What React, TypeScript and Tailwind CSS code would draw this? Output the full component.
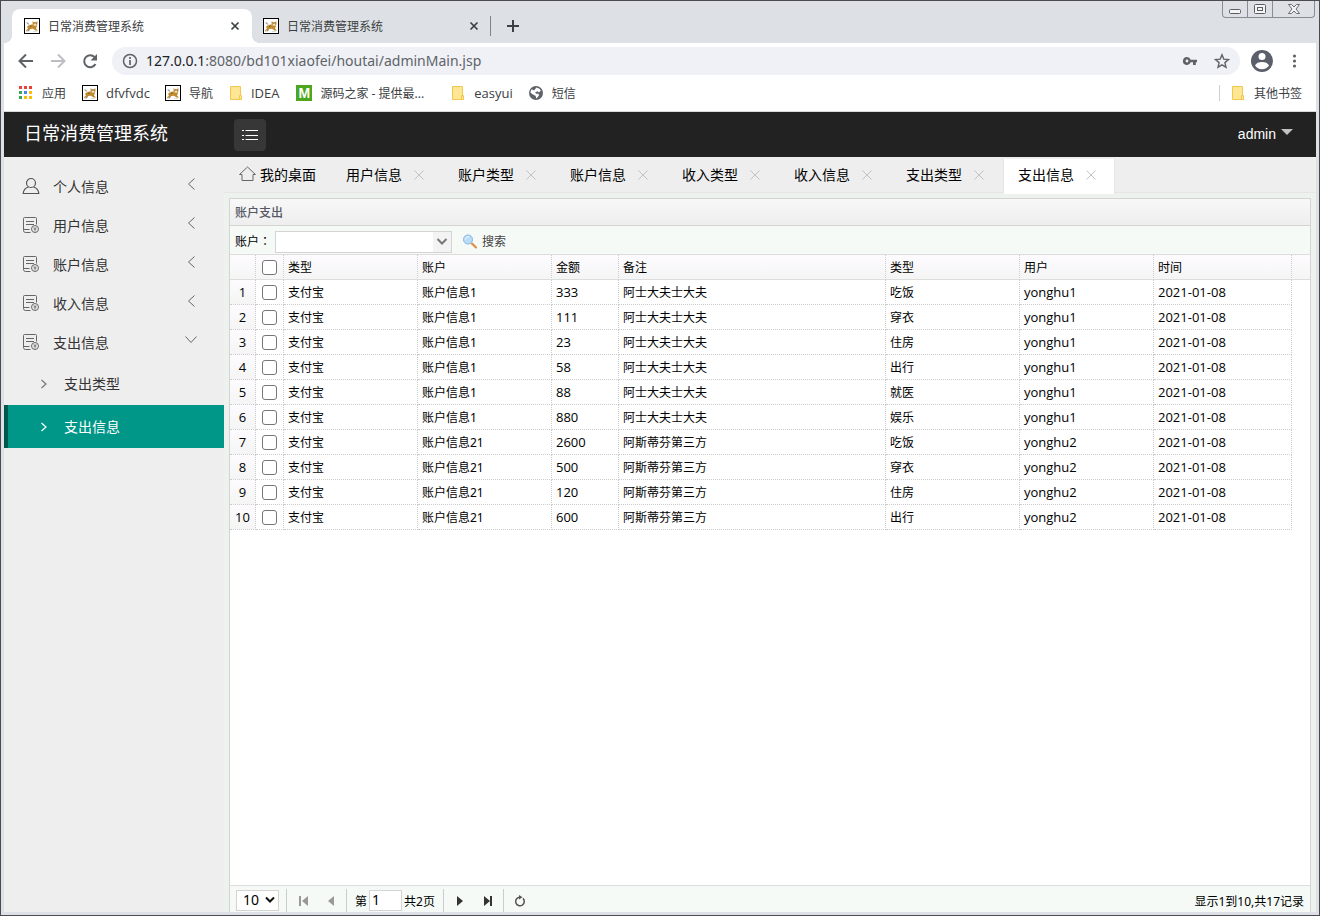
import clsx from 'clsx';
import { useState } from 'react';

const font = "font-['Noto_Sans','Noto_Sans_CJK_SC',sans-serif]";
const latin = "font-['Open_Sans','Noto_Sans_CJK_SC',sans-serif]";

const menus = ['个人信息', '用户信息', '账户信息', '收入信息', '支出信息'];
const tabs = ['用户信息', '账户类型', '账户信息', '收入类型', '收入信息', '支出类型', '支出信息'];

const rows = [
  { account: '账户信息1', amount: 333, note: '阿士大夫士大夫', kind: '吃饭', user: 'yonghu1' },
  { account: '账户信息1', amount: 111, note: '阿士大夫士大夫', kind: '穿衣', user: 'yonghu1' },
  { account: '账户信息1', amount: 23, note: '阿士大夫士大夫', kind: '住房', user: 'yonghu1' },
  { account: '账户信息1', amount: 58, note: '阿士大夫士大夫', kind: '出行', user: 'yonghu1' },
  { account: '账户信息1', amount: 88, note: '阿士大夫士大夫', kind: '就医', user: 'yonghu1' },
  { account: '账户信息1', amount: 880, note: '阿士大夫士大夫', kind: '娱乐', user: 'yonghu1' },
  { account: '账户信息21', amount: 2600, note: '阿斯蒂芬第三方', kind: '吃饭', user: 'yonghu2' },
  { account: '账户信息21', amount: 500, note: '阿斯蒂芬第三方', kind: '穿衣', user: 'yonghu2' },
  { account: '账户信息21', amount: 120, note: '阿斯蒂芬第三方', kind: '住房', user: 'yonghu2' },
  { account: '账户信息21', amount: 600, note: '阿斯蒂芬第三方', kind: '出行', user: 'yonghu2' },
];

function CatIcon() {
  return (
    <svg className="size-4 shrink-0" viewBox="0 0 16 16" aria-hidden="true">
      <rect x="0.5" y="0.5" width="15" height="15" fill="#fff" stroke="#000" />
      <path d="M2 4.500h2l1.500 2H4z" fill="#9c9a92" />
      <path d="M3 9c1-1.500 3-2.500 5-2.500h4l1 1.500-1 2.500 2 2h-2.500L9 10.800l-3 .2-2.500 1.800H1.500L4 10.500z" fill="#c08a2e" />
      <path d="M8.500 3l1.300 1h2.400l1.300-1v3.500L12 8H9.500l-1-1.500z" fill="#cfa257" />
      <path d="M10 6h2v1.500h-2z" fill="#f5e6c4" />
      <path d="M9.500 5h1M12 5h1M6 8.500l1.500-.5M4 13l2-1.500" stroke="#5a4a30" strokeWidth="0.7" fill="none" />
      <path d="M2 13.500h3M9 13.500h4" stroke="#d8d6cf" strokeWidth="0.8" />
    </svg>
  );
}

function FolderIcon() {
  return (
    <svg className="h-4 w-3.5 shrink-0" viewBox="0 0 14 16" aria-hidden="true">
      <path d="M1.500 1.500h10v9h1v4h-11z" fill="#ffe694" stroke="#f0c850" />
      <path d="M10.500 14v-3.500h1" fill="none" stroke="#f0c850" />
    </svg>
  );
}

function CloseIcon({ className }: { className?: string }) {
  return (
    <svg className={clsx('size-2.5', className)} viewBox="0 0 10 10" fill="none" stroke="currentColor" aria-hidden="true">
      <path d="M0.500 0.500l9 9M9.500 0.500l-9 9" />
    </svg>
  );
}

function BrowserTab({ active }: { active?: boolean }) {
  return (
    <div
      className={clsx(
        'relative flex h-[34px] items-center text-xs text-[#3c4043]',
        active ? 'w-60 rounded-t-lg bg-white pr-2.5 pl-3' : 'w-[238px] pr-[9px] pl-[11px]',
      )}
    >
      {active && (
        <>
          <span className="absolute bottom-0 -left-2 size-2 bg-[radial-gradient(circle_at_0_0,#dde1e5_8px,#fff_8px)]" />
          <span className="absolute -right-2 bottom-0 size-2 bg-[radial-gradient(circle_at_100%_0,#dde1e5_8px,#fff_8px)]" />
        </>
      )}
      <CatIcon />
      <span className="ml-2 flex-1 pt-0.5">日常消费管理系统</span>
      <button type="button" aria-label="关闭标签页" className="p-0.5">
        <svg className="size-2.5" viewBox="0 0 10 10" fill="none" stroke="currentColor" strokeWidth="1.700" aria-hidden="true">
          <path d="M1.500 1.500l7 7M8.500 1.500l-7 7" />
        </svg>
      </button>
    </div>
  );
}

function TitleBar() {
  return (
    <div className="flex h-[42px] items-end bg-[#dde1e5] pl-2">
      <BrowserTab active />
      <BrowserTab />
      <div className="flex h-[34px] items-center">
        <span className="h-5 w-px bg-[#808488]" />
        <button type="button" aria-label="新建标签页" className="ml-4">
          <svg className="size-3" viewBox="0 0 12 12" fill="none" stroke="#3c4043" strokeWidth="2" aria-hidden="true">
            <path d="M6 0v12M0 6h12" />
          </svg>
        </button>
      </div>
      <div className="mr-px ml-auto flex h-[17px] self-start rounded-b-sm border border-t-0 border-[#8a8c94]">
        <button type="button" aria-label="最小化" className="flex w-6 items-center justify-center">
          <svg className="h-3.5 w-3" viewBox="0 0 12 14" fill="none" stroke="#5c5e66" aria-hidden="true">
            <rect x="0.5" y="7.5" width="11" height="4" rx="1" fill="#f4f4f4" />
          </svg>
        </button>
        <button type="button" aria-label="最大化" className="flex w-[26px] items-center justify-center border-x border-[#8a8c94]">
          <svg className="h-2.5 w-3" viewBox="0 0 12 10" fill="none" stroke="#5c5e66" aria-hidden="true">
            <rect x="0.5" y="0.5" width="11" height="9" rx="1" fill="#f4f4f4" />
            <rect x="3.5" y="3.5" width="5" height="3" />
          </svg>
        </button>
        <button type="button" aria-label="关闭" className="flex w-[41px] items-center justify-center">
          <svg className="h-2.5 w-3" viewBox="0 0 12 10" fill="#f4f4f4" stroke="#5c5e66" strokeWidth="0.9" aria-hidden="true">
            <path d="M0.5 0.5h3L6 3l2.500-2.500h3L8 5l3.500 4.500h-3L6 7 3.500 9.500h-3L4 5z" />
          </svg>
        </button>
      </div>
    </div>
  );
}

function AddressBar() {
  return (
    <div className="flex h-9 items-center bg-white pr-4 pl-3.5 text-[#5f6368]">
      <button type="button" aria-label="后退" className="w-8">
        <svg className="size-4" viewBox="0 0 16 16" fill="none" stroke="#5f6368" strokeWidth="2" aria-hidden="true">
          <path d="M15 8H2M8 1.500L1.500 8 8 14.500" />
        </svg>
      </button>
      <button type="button" aria-label="前进" className="w-8">
        <svg className="size-4" viewBox="0 0 16 16" fill="none" stroke="#bcbec2" strokeWidth="2" aria-hidden="true">
          <path d="M1 8h13M8 1.500L14.500 8 8 14.500" />
        </svg>
      </button>
      <button type="button" aria-label="重新加载" className="w-[30px]">
        <svg className="size-4" viewBox="0 0 16 16" aria-hidden="true">
          <path d="M13.500 11A6 6 0 1 1 12.500 4" fill="none" stroke="#5f6368" strokeWidth="2" />
          <path d="M15 1v6.500H8.500z" fill="#5f6368" />
        </svg>
      </button>
      <div className="flex h-7 flex-1 items-center rounded-full bg-[#eff1f6] px-2.5">
        <svg className="size-4" viewBox="0 0 16 16" fill="none" stroke="#5f6368" aria-hidden="true">
          <circle cx="8" cy="8" r="6.500" strokeWidth="1.500" />
          <path d="M8 7v5M8 4v2" strokeWidth="1.700" />
        </svg>
        <span className="ml-2 flex-1 text-sm">
          <span className="text-[#202124]">127.0.0.1</span>:8080/bd101xiaofei/houtai/adminMain.jsp
        </span>
        <button type="button" aria-label="密码" className="mr-4">
          <svg className="h-4 w-4" viewBox="0 0 16 16" fill="#5f6368" aria-hidden="true">
            <path d="M5 4a4 4 0 1 0 3.700 5.300H11V12h2.800V9.300H15V6.700H8.700A4 4 0 0 0 5 4zm0 2.600a1.400 1.400 0 1 1 0 2.800 1.400 1.400 0 0 1 0-2.800z" />
          </svg>
        </button>
        <button type="button" aria-label="收藏">
          <svg className="size-4" viewBox="0 0 16 16" fill="none" stroke="#5f6368" strokeWidth="1.400" aria-hidden="true">
            <path d="M8 1.800l1.800 4.300 4.700.4-3.600 3.100 1.100 4.600L8 11.800l-4 2.400 1.100-4.600L1.500 6.500l4.700-.4z" />
          </svg>
        </button>
      </div>
      <button type="button" aria-label="用户" className="ml-2.5">
        <svg className="size-6" viewBox="0 0 24 24" aria-hidden="true">
          <circle cx="12" cy="12" r="11" fill="#5b5f6a" />
          <circle cx="12" cy="7.500" r="3.500" fill="#fff" />
          <path d="M5 16.500c1-2.500 4-3.500 7-3.500s6 1 7 3.500c-1.500 2.300-4 3.700-7 3.700s-5.500-1.400-7-3.700z" fill="#fff" />
        </svg>
      </button>
      <button type="button" aria-label="菜单" className="ml-3.5">
        <svg className="h-4 w-3" viewBox="0 0 12 16" fill="#5f6368" aria-hidden="true">
          <circle cx="6.500" cy="3" r="1.600" />
          <circle cx="6.500" cy="8" r="1.600" />
          <circle cx="6.500" cy="13" r="1.600" />
        </svg>
      </button>
    </div>
  );
}

function BookmarkBar() {
  const dots = ['#ea4335', '#ea4335', '#ea4335', '#34a853', '#4285f4', '#fbbc05', '#34a853', '#fbbc05', '#fbbc05'];
  const link = 'flex items-center gap-2';
  return (
    <nav className="flex h-[33px] items-center border-b border-[#d6d8da] bg-white pr-3.5 pb-1 pl-3.5 text-xs text-[#3c4043]">
      <a href="#" className={link}>
        <svg className="size-4" viewBox="0 0 16 16" aria-hidden="true">
          {dots.map((c, i) => (
            <rect key={i} x={1 + (i % 3) * 5} y={1 + Math.floor(i / 3) * 5} width="3" height="3" fill={c} />
          ))}
        </svg>
        <span className="pt-0.5">应用</span>
      </a>
      <a href="#" className={clsx(link, 'ml-4')}>
        <CatIcon />
        <span className={clsx(latin, 'pt-0.5 text-[13px]')}>dfvfvdc</span>
      </a>
      <a href="#" className={clsx(link, 'ml-[15px]')}>
        <CatIcon />
        <span className="pt-0.5">导航</span>
      </a>
      <a href="#" className={clsx(link, 'ml-4')}>
        <FolderIcon />
        <span className={clsx(latin, 'pt-0.5 text-[13px]')}>IDEA</span>
      </a>
      <a href="#" className={clsx(link, 'ml-[17px]')}>
        <span className="flex size-4 items-center justify-center bg-[#4ca61e] font-['Liberation_Sans',sans-serif] text-sm font-bold text-white">
          M
        </span>
        <span className="pt-0.5">源码之家 - 提供最...</span>
      </a>
      <a href="#" className="ml-[27px] flex items-center gap-[9px]">
        <FolderIcon />
        <span className={clsx(latin, 'pt-0.5 text-[13px]')}>easyui</span>
      </a>
      <a href="#" className={clsx(link, 'ml-[15px]')}>
        <svg className="size-4" viewBox="0 0 16 16" aria-hidden="true">
          <circle cx="8" cy="8" r="7" fill="#5f6368" />
          <path d="M8.500 2.500c2 .3 3.500 1.500 4.300 3L11 7.500 9.500 6.200 7 7.500l1.500 1.200h2l.5 1.800-2.500 3c-.8-.5-.3-2-1-2.700L5 9.500 2.500 7.800c0-1.300.5-2.500 1.300-3.500L6 5.500z" fill="#fff" />
        </svg>
        <span className="pt-0.5">短信</span>
      </a>
      <span className="ml-auto h-4 w-px bg-[#ccced2]" />
      <a href="#" className="ml-[11px] flex items-center gap-[9px]">
        <FolderIcon />
        <span className="pt-0.5">其他书签</span>
      </a>
    </nav>
  );
}

function AppHeader() {
  return (
    <header className="flex h-[45px] items-center bg-[#222] pr-[23px] text-white">
      <h1 className="w-[230px] pb-1 pl-5 text-lg">日常消费管理系统</h1>
      <button type="button" aria-label="切换菜单" className="flex size-8 items-center justify-center rounded-sm bg-[#373737]">
        <svg className="size-[18px]" viewBox="0 0 18 18" stroke="#fff" aria-hidden="true">
          <path d="M1 4.500h2M4.500 4.500H17M1 9.500h2M4.500 9.500H17M1 13.500h2M4.500 13.500H17" />
        </svg>
      </button>
      <button type="button" className="ml-auto flex items-center gap-[5px] pb-0.5 font-['Liberation_Sans',sans-serif] text-sm">
        admin
        <svg className="mb-1 h-1.5 w-3 text-[#c2c2c2]" viewBox="0 0 12 6" fill="currentColor" aria-hidden="true">
          <path d="M0 0h12L6 6z" />
        </svg>
      </button>
    </header>
  );
}

function UserIcon() {
  return (
    <svg className="mb-0.5 size-[18px]" viewBox="0 0 18 18" fill="none" stroke="#555" strokeWidth="1.200" aria-hidden="true">
      <circle cx="9" cy="6" r="4.500" />
      <path d="M6.500 10C3 11 1.500 13 1.200 16.500h15.600C16.500 13 15 11 11.500 10" />
    </svg>
  );
}

function FormIcon() {
  return (
    <svg className="mb-0.5 size-[18px]" viewBox="0 0 18 18" fill="none" stroke="#666" aria-hidden="true">
      <path d="M8.500 16.500h-5a2 2 0 0 1-2-2V2.500a1 1 0 0 1 1-1h11a1 1 0 0 1 1 1v6M4 5.500h8M4 8.500h8M1.500 13.500h6" />
      <circle cx="13" cy="13" r="3.500" />
      <path d="M11.500 13h3M13 12.500v3M11.500 11.200l1.500 1.300 1.500-1.300" strokeWidth="0.800" />
    </svg>
  );
}

function Sidebar() {
  return (
    <aside className="w-[220px] shrink-0 bg-[#eee] pt-2.5 text-sm text-[#333]">
      <ul>
        {menus.map((m, i) => {
          const open = i === menus.length - 1;
          return (
            <li key={m}>
              <button type="button" aria-expanded={open} className="flex h-[39px] w-full items-center pr-[27px] pl-[18px]">
                {i === 0 ? <UserIcon /> : <FormIcon />}
                <span className="ml-[13px] flex-1 text-left">{m}</span>
                <svg
                  className={clsx('mb-1.5 size-3', open && '-rotate-90')}
                  viewBox="0 0 12 12"
                  fill="none"
                  stroke="#666"
                  aria-hidden="true"
                >
                  <path d="M9.500 0.500L3.500 6l6 5.500" />
                </svg>
              </button>
            </li>
          );
        })}
      </ul>
      <ul>
        {['支出类型', '支出信息'].map((m, i) => (
          <li key={m}>
            <a
              href="#"
              className={clsx(
                'flex h-[43px] items-center border-l-4 pl-8',
                i === 1 ? 'border-[#00584d] bg-[#009688] text-white' : 'border-transparent',
              )}
            >
              <svg
                className={clsx('h-2.5 w-2', i === 0 && 'text-[#777]')}
                viewBox="0 0 8 10"
                fill="none"
                stroke="currentColor"
                strokeWidth="1.200"
                aria-hidden="true"
              >
                <path d="M1.500 1l4.500 4-4.500 4" />
              </svg>
              <span className="ml-4">{m}</span>
            </a>
          </li>
        ))}
      </ul>
    </aside>
  );
}

function PageTabs() {
  return (
    <div className="flex h-9 items-start border-b border-[#e6e6e6] bg-[#eee] pt-0.5 text-sm text-black">
      <button type="button" className="flex h-8 items-center gap-1 px-[15px]">
        <svg className="mb-0.5 h-4 w-[17px]" viewBox="0 0 17 16" fill="none" stroke="#666" aria-hidden="true">
          <path d="M0.500 8.500L8.500 1l8 7.500h-2.500v6H3v-6z" />
        </svg>
        我的桌面
      </button>
      {tabs.map((t, i) => (
        <div
          key={t}
          className={clsx(
            'flex w-28 items-center border-x pl-3.5',
            i === tabs.length - 1 ? 'h-[35px] border-[#e6e6e6] bg-white pb-[3px]' : 'h-8 border-transparent',
          )}
        >
          <button type="button">{t}</button>
          <button type="button" aria-label={`关闭${t}`} className="ml-3 text-[#c2c2c2]">
            <CloseIcon />
          </button>
        </div>
      ))}
    </div>
  );
}

function ExpenseTable() {
  const [selected, setSelected] = useState<number[]>([]);
  const toggle = (i: number) =>
    setSelected((s) => (s.includes(i) ? s.filter((n) => n !== i) : [...s, i]));

  const head = 'border-r border-b border-r-[#ccc] border-b-[#ddd] [border-right-style:dotted] text-left font-normal';
  const cell = 'border-r border-b border-dotted border-[#ccc]';
  const text = 'pt-0.5 pl-1';
  const num = clsx(latin, 'text-[13px] leading-5');
  const box = 'mx-auto block size-[15px] appearance-none rounded-[3px] border border-[#767676] bg-white checked:bg-[#0075ff]';

  return (
    <table className="w-full table-fixed border-separate border-spacing-0 text-xs text-black">
      <colgroup>
        <col className="w-[26px]" />
        <col className="w-7" />
        <col className="w-[134px]" />
        <col className="w-[134px]" />
        <col className="w-[67px]" />
        <col className="w-[267px]" />
        <col className="w-[134px]" />
        <col className="w-[134px]" />
        <col className="w-[138px]" />
        <col className="w-[18px]" />
      </colgroup>
      <thead>
        <tr className="h-[25px] bg-linear-to-b from-[#fdfbfe] to-[#f5f5f5]">
          <th className={head} />
          <th className={head}>
            <input
              type="checkbox"
              aria-label="全选"
              className={box}
              checked={selected.length === rows.length}
              onChange={(e) => setSelected(e.target.checked ? rows.map((_, i) => i) : [])}
            />
          </th>
          {['类型', '账户', '金额', '备注', '类型', '用户', '时间'].map((h, i) => (
            <th key={i} className={clsx(head, text)}>
              {h}
            </th>
          ))}
          <th className="border-b border-[#ddd]" />
        </tr>
      </thead>
      <tbody>
        {rows.map((r, i) => (
          <tr key={i} className="h-[25px]">
            <td className={clsx(cell, num, 'bg-linear-to-b from-[#fdfbfe] to-[#f5f5f5] text-center')}>{i + 1}</td>
            <td className={cell}>
              <input
                type="checkbox"
                aria-label={`选择第${i + 1}行`}
                className={box}
                checked={selected.includes(i)}
                onChange={() => toggle(i)}
              />
            </td>
            <td className={clsx(cell, text)}>支付宝</td>
            <td className={clsx(cell, text)}>{r.account}</td>
            <td className={clsx(cell, num, 'pl-1')}>{r.amount}</td>
            <td className={clsx(cell, text)}>{r.note}</td>
            <td className={clsx(cell, text)}>{r.kind}</td>
            <td className={clsx(cell, num, 'pl-1')}>{r.user}</td>
            <td className={clsx(cell, num, 'pl-1')}>2021-01-08</td>
            <td />
          </tr>
        ))}
      </tbody>
    </table>
  );
}

function PageIcon({ label, d, muted }: { label: string; d: string; muted?: boolean }) {
  return (
    <button type="button" aria-label={label} disabled={muted} className={muted ? 'text-[#999]' : 'text-[#333]'}>
      <svg className="h-2.5 w-2.5" viewBox="0 0 10 10" fill="currentColor" aria-hidden="true">
        <path d={d} />
      </svg>
    </button>
  );
}

function Pager() {
  const line = 'h-full w-px bg-[#ccc]';
  return (
    <footer className="flex h-[27px] items-center border-t border-[#ddd] bg-[#f5faf6] pt-[3px] pr-1.5 pl-1.5 text-xs text-black">
      <div className="relative">
        <select
          aria-label="每页条数"
          className="block h-[21px] w-[43px] appearance-none border border-[#d4d4d4] bg-white pb-0.5 pl-1.5 text-sm leading-4"
        >
          <option>10</option>
          <option>20</option>
        </select>
        <svg className="pointer-events-none absolute top-1.5 right-1 h-2 w-2.5" viewBox="0 0 10 8" fill="none" stroke="#111" strokeWidth="2" aria-hidden="true">
          <path d="M1 1.500l4 4 4-4" />
        </svg>
      </div>
      <span className={clsx(line, 'mr-3 ml-[7px]')} />
      <PageIcon label="首页" muted d="M0 0h2v10H0zM9 0v10L3 5z" />
      <span className="w-[17px]" />
      <PageIcon label="上一页" muted d="M8 0v10L2 5z" />
      <span className={clsx(line, 'mr-2 ml-2.5')} />
      <label className="flex items-center gap-0.5">
        <span className="pt-0.5">第</span>
        <input defaultValue="1" className="h-[21px] w-[33px] border border-[#d4d4d4] bg-white pb-0.5 pl-0.5 text-sm" />
      </label>
      <span className="ml-0.5 pt-0.5">共2页</span>
      <span className={clsx(line, 'mr-3 ml-2')} />
      <PageIcon label="下一页" d="M1 0v10L7 5z" />
      <span className="w-[17px]" />
      <PageIcon label="末页" d="M1 0v10L7 5zM7 0h2v10H7z" />
      <span className={clsx(line, 'mr-2.5 ml-2.5')} />
      <button type="button" aria-label="刷新">
        <svg className="size-3" viewBox="0 0 12 12" fill="none" stroke="#555" strokeWidth="1.500" aria-hidden="true">
          <path d="M9 3.400A4.300 4.300 0 1 1 5.500 2.200" />
          <path d="M5 0l3.500 2.200L5 4.400z" fill="#555" stroke="none" />
        </svg>
      </button>
      <span className="ml-auto pt-0.5">显示1到10,共17记录</span>
    </footer>
  );
}

export default function App() {
  return (
    <div className={clsx(font, 'flex min-h-screen flex-col border border-[#4a4a50] bg-[#dde1e5] px-[3px] pb-[3px]')}>
      <TitleBar />
      <AddressBar />
      <BookmarkBar />
      <AppHeader />
      <div className="flex flex-1">
        <Sidebar />
        <main className="flex min-w-0 flex-1 flex-col bg-[#eef2ee]">
          <PageTabs />
          <section className="mt-[5px] mr-[5px] ml-[5px] flex flex-1 flex-col border border-b-0 border-[#d4d4d4] bg-white">
            <h2 className="flex h-[27px] items-center border-b border-[#d4d4d4] bg-linear-to-b from-[#f8f8f8] to-[#eee] pt-0.5 pl-[5px] text-xs font-medium text-[#575765]">
              账户支出
            </h2>
            <form className="flex h-[29px] items-center border-b border-[#ddd] bg-[#f5faf6] pt-[3px] pl-[5px] text-xs text-black">
              <label htmlFor="account">
                账户<span className="font-['Noto_Sans_CJK_TC',sans-serif]">：</span>
              </label>
              <div className="relative ml-1">
                <select id="account" className="block h-[22px] w-[177px] appearance-none border border-[#d4d4d4] bg-white">
                  <option value="" />
                </select>
                <span className="pointer-events-none absolute top-px right-px flex h-5 w-[18px] items-center justify-center bg-[#f3f3f3]">
                  <svg className="h-2 w-3" viewBox="0 0 12 8" fill="none" stroke="#777" strokeWidth="2" aria-hidden="true">
                    <path d="M1.500 1l4.500 4.500L10.500 1" />
                  </svg>
                </span>
              </div>
              <button type="button" className="ml-2.5 flex items-center gap-1 text-[#444]">
                <svg className="size-4" viewBox="0 0 16 16" aria-hidden="true">
                  <path d="M10 9.500l4 4" stroke="#e08a3c" strokeWidth="2" strokeLinecap="round" />
                  <circle cx="6" cy="5.500" r="4.500" fill="#b9dcfa" stroke="#8bb4dc" />
                  <path d="M3.500 5.500A2.800 2.800 0 0 1 7 2.800" stroke="#fff" fill="none" />
                </svg>
                搜索
              </button>
            </form>
            <div className="flex-1">
              <ExpenseTable />
            </div>
            <Pager />
          </section>
        </main>
      </div>
    </div>
  );
}
